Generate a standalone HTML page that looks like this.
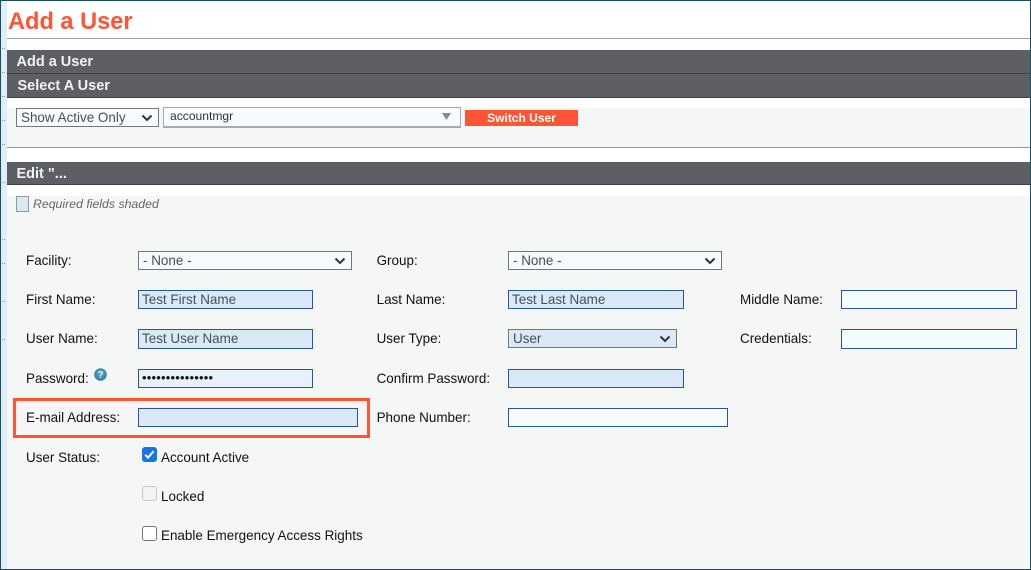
<!DOCTYPE html>
<html><head><meta charset="utf-8"><style>
html,body{margin:0;padding:0;background:#fff}
#p{position:relative;width:1031px;height:570px;overflow:hidden;background:#fff;font-family:"Liberation Sans",sans-serif;font-size:13.45px;color:#111}
#p div{position:absolute;box-sizing:border-box}
.t{white-space:nowrap;line-height:18px}
.bar{left:7px;width:1023px;background:#5e5f65;border-bottom:1px solid #3f4146;color:#f0f3f5;font-weight:bold;font-size:14.5px;line-height:24px}
.in{height:19px;border:1px solid #2c5499;background:#f6fbff;color:#44505c;line-height:18px;padding-left:3px;white-space:nowrap}
.rq{background:#dbe9f7}
.sel{height:19px;border:1px solid #767676;background:#f6fbff;color:#44505c;line-height:18px;padding-left:4px;white-space:nowrap}
.sel svg{position:absolute;right:5px;top:5px}
.cb{width:14.5px;height:14.5px;border-radius:3px;border:1px solid #767676;background:#fff}
.d{left:2px;width:4px;height:1px;background:repeating-linear-gradient(90deg,#8a959b 0 1px,transparent 1px 2px)}
</style></head><body><div id="p">
<div style="left:0;top:0;width:7px;height:570px;background:linear-gradient(90deg,#d8e8f5,#e4f0f9 60%,#dcebf7)"></div>
<div class="d" style="top:48px"></div>
<div class="d" style="top:72px"></div>
<div class="d" style="top:96px"></div>
<div class="d" style="top:120px"></div>
<div class="d" style="top:144px"></div>
<div class="d" style="top:182px"></div>
<div class="d" style="top:239px"></div>
<div class="d" style="top:263px"></div>
<div class="d" style="top:301px"></div>
<div class="d" style="top:339px"></div>
<div class="t" style="left:8px;top:8px;font-size:23.6px;line-height:28px;font-weight:bold;color:#ff5436">Add a User</div>
<div style="left:7px;top:38px;width:1023px;height:1px;background:#90a4aa"></div>
<div class="bar" style="top:50px;height:24px;padding-left:9.5px">Add a User</div>
<div class="bar" style="top:74px;height:24px;padding-left:10.5px">Select A User</div>
<div style="left:7px;top:108px;width:1023px;height:40px;background:#f5f7f6;border-bottom:1px solid #999"></div>
<div class="sel" style="left:16px;top:108px;width:143px">Show Active Only<svg width="12" height="8" viewBox="0 0 12 8"><path d="M1.5 1.5L6 6L10.5 1.5" fill="none" stroke="#333" stroke-width="2"/></svg></div>
<div style="left:163px;top:107px;width:298px;height:21px;background:#f6fbff;border:1px solid #aaa;border-bottom:2px solid #aaa;font-size:12.1px;line-height:16px;padding-left:6px;color:#333">accountmgr</div>
<svg style="position:absolute;left:442px;top:113px" width="9" height="7" viewBox="0 0 9 7"><path d="M0 0H9L4.5 7Z" fill="#8a8a8a"/></svg>
<div style="left:465px;top:110px;width:113px;height:16px;background:#ff5436;color:#fff;font-weight:bold;font-size:12px;line-height:16px;text-align:center">Switch User</div>
<div class="bar" style="top:162px;height:23px;padding-left:9.5px">Edit "...</div>
<div style="left:7px;top:196px;width:1023px;height:374px;background:#f5f7f6"></div>
<div style="left:16px;top:196px;width:13px;height:16px;background:#dbe9f7;border:1px solid #8c9aa3"></div>
<div class="t" style="left:33px;top:196px;font-size:12.3px;line-height:16px;font-style:italic;color:#666">Required fields shaded</div>

<div class="t" style="left:26px;top:252px">Facility:</div>
<div class="sel" style="left:138px;top:251px;width:214px">- None -<svg width="12" height="8" viewBox="0 0 12 8"><path d="M1.5 1.5L6 6L10.5 1.5" fill="none" stroke="#333" stroke-width="2"/></svg></div>
<div class="t" style="left:376.6px;top:252px">Group:</div>
<div class="sel" style="left:508px;top:251px;width:214px">- None -<svg width="12" height="8" viewBox="0 0 12 8"><path d="M1.5 1.5L6 6L10.5 1.5" fill="none" stroke="#333" stroke-width="2"/></svg></div>

<div class="t" style="left:26px;top:291px">First Name:</div>
<div class="in rq" style="left:138px;top:290px;width:175px">Test First Name</div>
<div class="t" style="left:376.6px;top:291px">Last Name:</div>
<div class="in rq" style="left:508px;top:290px;width:176px">Test Last Name</div>
<div class="t" style="left:740px;top:291px">Middle Name:</div>
<div class="in" style="left:841px;top:290px;width:176px"></div>

<div class="t" style="left:26px;top:330px">User Name:</div>
<div class="in rq" style="left:138px;top:329px;width:175px;height:20px">Test User Name</div>
<div class="t" style="left:376.6px;top:330px">User Type:</div>
<div class="sel rq" style="left:508px;top:329px;width:169px;background:#dbe9f7">User<svg width="12" height="8" viewBox="0 0 12 8"><path d="M1.5 1.5L6 6L10.5 1.5" fill="none" stroke="#333" stroke-width="2"/></svg></div>
<div class="t" style="left:740px;top:330px">Credentials:</div>
<div class="in" style="left:841px;top:329px;width:176px;height:20px"></div>

<div class="t" style="left:26px;top:370px">Password:</div>
<svg style="position:absolute;left:94px;top:368px" width="13" height="13" viewBox="0 0 13 13"><defs><radialGradient id="h" cx=".5" cy=".4" r=".6"><stop offset="0" stop-color="#5aa9c4"/><stop offset="1" stop-color="#2f7f9c"/></radialGradient></defs><circle cx="6.5" cy="6.5" r="6.3" fill="url(#h)"/><text x="6.5" y="10" font-family="Liberation Sans" font-size="10" font-weight="bold" fill="#d8f0f8" text-anchor="middle">?</text></svg>
<div class="in" style="left:138px;top:369px;width:175px;background:#e8f0fb;color:#111;font-size:13px;line-height:16px;letter-spacing:.2px">•••••••••••••••</div>
<div class="t" style="left:376.6px;top:370px">Confirm Password:</div>
<div class="in rq" style="left:508px;top:369px;width:176px"></div>

<div style="left:13px;top:398px;width:357px;height:40px;border:3px solid #ff5436"></div>
<div class="t" style="left:26px;top:409px">E-mail Address:</div>
<div class="in rq" style="left:138px;top:408px;width:220px"></div>
<div class="t" style="left:376.6px;top:409px">Phone Number:</div>
<div class="in" style="left:508px;top:408px;width:220px"></div>

<div class="t" style="left:26px;top:449px">User Status:</div>
<div class="cb" style="left:142px;top:447px;background:#1a73e8;border-color:#1a73e8"></div>
<svg style="position:absolute;left:142px;top:447px" width="15" height="15" viewBox="0 0 15 15"><path d="M3.2 7.8L6 10.6L11.6 4.2" fill="none" stroke="#fff" stroke-width="2"/></svg>
<div class="t" style="left:161px;top:449px">Account Active</div>
<div class="cb" style="left:142px;top:486px;border-color:#c8c8c8;background:#f3f3f3"></div>
<div class="t" style="left:161px;top:488px">Locked</div>
<div class="cb" style="left:142px;top:526px"></div>
<div class="t" style="left:161px;top:527px">Enable Emergency Access Rights</div>

<div style="left:0;top:0;width:1031px;height:1px;background:#17505f"></div>
<div style="left:0;top:569px;width:1031px;height:1px;background:#17505f"></div>
<div style="left:0;top:0;width:1.4px;height:570px;background:#17505f"></div>
<div style="left:1030px;top:0;width:1px;height:570px;background:#17505f"></div>
</div></body></html>
